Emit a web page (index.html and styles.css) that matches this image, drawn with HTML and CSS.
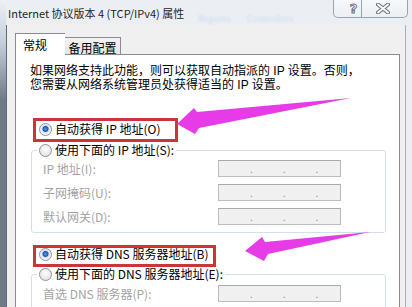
FILE: index.html
```html
<!DOCTYPE html>
<html lang="zh-CN">
<head>
  <meta charset="UTF-8" />
  <title>Internet 协议版本 4 (TCP/IPv4) 属性</title>
  <link rel="stylesheet" href="styles.css">
</head>
<body>
  <div class="window">
    <div class="titlebar">
      <span class="caption">Internet 协议版本 4 (TCP/IPv4) 属性</span>
      <span class="glass">Reports Controllers</span>
      <div class="caption-btns">
        <span class="cbtn help">?</span>
        <span class="cbtn close">
          <svg width="14" height="11" viewBox="0 0 14 11">
            <path d="M2 1.5 L12 9.5 M12 1.5 L2 9.5" stroke="#6f747a" stroke-width="4" stroke-linecap="round"/>
            <path d="M2 1.5 L12 9.5 M12 1.5 L2 9.5" stroke="#fbfbfb" stroke-width="2" stroke-linecap="round"/>
          </svg>
        </span>
      </div>
    </div>

    <div class="client">
      <div class="tabs">
        <span class="tab active">常规</span>
        <span class="tab">备用配置</span>
      </div>

      <div class="panel">
        <p class="intro">如果网络支持此功能，则可以获取自动指派的 IP 设置。否则，<br>您需要从网络系统管理员处获得适当的 IP 设置。</p>

        <div class="option first"><span class="radio checked"></span>自动获得 IP 地址(O)</div>

        <fieldset class="group">
          <legend class="option"><span class="radio"></span>使用下面的 IP 地址(S):</legend>
          <div class="field"><label>IP 地址(I):</label><span class="ipbox"><i>.</i><i>.</i><i>.</i></span></div>
          <div class="field"><label>子网掩码(U):</label><span class="ipbox"><i>.</i><i>.</i><i>.</i></span></div>
          <div class="field"><label>默认网关(D):</label><span class="ipbox"><i>.</i><i>.</i><i>.</i></span></div>
        </fieldset>

        <div class="option dns"><span class="radio checked"></span>自动获得 DNS 服务器地址(B)</div>

        <fieldset class="group dns-group">
          <legend class="option"><span class="radio"></span>使用下面的 DNS 服务器地址(E):</legend>
          <div class="field"><label>首选 DNS 服务器(P):</label><span class="ipbox"><i>.</i><i>.</i><i>.</i></span></div>
        </fieldset>
      </div>
    </div>
  </div>

  <!-- 标注：红框和箭头 -->
  <svg class="marks" width="412" height="307" viewBox="0 0 412 307">
    <rect x="34.5" y="119.5" width="142" height="21" fill="none" stroke="#cc3535" stroke-width="3"/>
    <rect x="34.5" y="246.5" width="180" height="19" fill="none" stroke="#cc3535" stroke-width="3"/>
    <polygon points="177,124 194,108 197,112 351,98 199,128 195,134" fill="#e63be6"/>
    <polygon points="245,251 262,237 265,242 370,232 268,254 264,261" fill="#e63be6"/>
  </svg>
</body>
</html>
```

FILE: styles.css
```css
body {
  margin: 0;
  width: 412px;
  height: 307px;
  overflow: hidden;
  position: relative;
  font-family: "Noto Sans CJK SC", "Noto Sans", sans-serif;
  font-size: 12px;
  color: #000;
  background:
    linear-gradient(#edf1f6, #c3ccd6 45px, #6f7a87 100px) left top / 6px 100% no-repeat,
    #ebeff4;
}
.window {
  display: flex;
  flex-direction: column;
  height: 100%;
}
.titlebar {
  height: 28px;
  display: flex;
  align-items: flex-start;
  padding-left: 8px;
}
.caption {
  align-self: center;
  color: #1e1e1e;
  font-size: 11px;
  line-height: 16px;
}
.glass {
  align-self: center;
  margin: 12px 0 0 14px;
  font-size: 9px;
  color: rgba(90, 150, 220, 0.22);
  filter: blur(0.8px);
  word-spacing: 14px;
}
.caption-btns {
  margin-left: auto;
  margin-right: 4px;
  width: 75px;
  height: 18px;
  display: flex;
  border: 1px solid #9aa4b0;
  border-top: none;
  border-radius: 0 0 5px 5px;
  background: linear-gradient(#f6f8fa, #eceff3);
  box-sizing: border-box;
}
.cbtn {
  display: flex;
  align-items: center;
  justify-content: center;
}
.help {
  width: 28px;
  padding-left: 12px;
  box-sizing: border-box;
  border-right: 1px solid #9aa4b0;
  font-family: "DejaVu Sans", sans-serif;
  font-weight: bold;
  font-size: 13px;
  color: #fbfbfb;
  -webkit-text-stroke: 1px #6f747a;
}
.close {
  flex: 1;
  padding-right: 4px;
}
.client {
  flex: 1;
  margin-left: 6px;
  width: 400px;
  box-sizing: border-box;
  border-left: 1px solid #5f6b78;
  border-right: 1px solid #a7b0ba;
  background: #f0f0f0;
  padding: 8px 0 0 8px;
  display: flex;
  flex-direction: column;
}
.tabs {
  display: flex;
  align-items: flex-end;
}
.tab {
  height: 17px;
  width: 56px;
  box-sizing: border-box;
  border: 1px solid #898c95;
  border-left: none;
  border-bottom: none;
  background: linear-gradient(#f3f3f3, #e5e5e5);
  display: flex;
  align-items: center;
  justify-content: center;
  padding-top: 2px;
}
.tab.active {
  position: relative;
  z-index: 1;
  height: 22px;
  width: 50px;
  margin-bottom: -1px;
  border-left: 1px solid #898c95;
  border-right: none;
  background: #fff;
  justify-content: flex-start;
  padding: 0 0 0 7px;
}
.panel {
  flex: 1;
  width: 385px;
  box-sizing: border-box;
  border: 1px solid #898c95;
  background: #fff;
  padding: 9px 0 0 14px;
}
.intro {
  margin: 0;
  font-family: "Liberation Sans", "Noto Sans CJK SC", sans-serif;
  line-height: 14px;
}
.option {
  display: flex;
  align-items: center;
  height: 16px;
  line-height: 16px;
  white-space: nowrap;
}
.option.first {
  margin: 29px 0 0 9px;
}
.option.dns {
  margin: 13px 0 0 9px;
}
.radio {
  width: 13px;
  height: 13px;
  box-sizing: border-box;
  border-radius: 50%;
  border: 1px solid #8e9196;
  background: radial-gradient(circle at 50% 40%, #fdfdfd, #dcdcdc);
  margin-right: 3px;
  flex: none;
}
.radio.checked {
  background: radial-gradient(circle at 50% 45%, #5c9ee8 0, #1d5ba8 2.5px, #cfe0f3 3.5px, #e8eef5 4.5px, #fafafa 6px);
}
.group {
  margin: 5px 0 0 1px;
  width: 355px;
  box-sizing: border-box;
  min-width: 0;
  border: 1px solid #d5dfe5;
  border-radius: 3px;
  padding: 2px 0 7px 11px;
}
.group legend {
  margin-left: -6px;
  padding: 0 2px;
}
.dns-group {
  margin-top: 4px;
  padding-top: 3px;
}
.field {
  display: flex;
  align-items: center;
  height: 17px;
}
.field + .field {
  margin-top: 7px;
}
.field label {
  width: 175px;
  color: #a3a3a3;
}
.ipbox {
  width: 123px;
  height: 17px;
  box-sizing: border-box;
  border: 1px solid #bcbcbc;
  border-top-color: #a9a9a9;
  background: #f0f0f0;
  display: flex;
  align-items: center;
}
.ipbox i {
  font-style: normal;
  color: #8a8a8a;
  font-size: 10px;
  margin-left: 30px;
}
.ipbox i:first-child {
  margin-left: 31px;
}
.marks {
  position: absolute;
  top: 0;
  left: 0;
  pointer-events: none;
}
```
